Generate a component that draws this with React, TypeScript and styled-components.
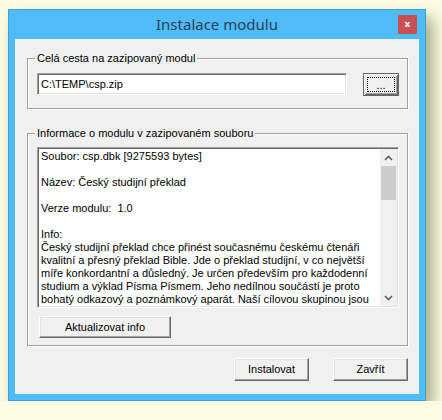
import React from "react";
import styled, { createGlobalStyle } from "styled-components";

const Global = createGlobalStyle`
  html, body { margin: 0; padding: 0; }
  body {
    background: #fcfce3;
    font-family: "Liberation Sans", Arial, sans-serif;
    font-size: 11px;
    color: #000;
  }
`;

const Page = styled.div`
  padding: 9px 0 0 8px;
`;

const Window = styled.div`
  width: 418px;
  height: 392px;
  box-sizing: border-box;
  background: #4fbcf7;
  border: 1px solid #3f9fdc;
  padding: 0 6px 6px 6px;
  display: flex;
  flex-direction: column;
  box-shadow: 7px 9px 14px rgba(90, 90, 50, 0.5);
`;

const TitleBar = styled.div`
  height: 29px;
  display: grid;
  grid-template-columns: 1fr auto 1fr;
  align-items: start;
`;

const Title = styled.div`
  grid-column: 2;
  font-family: "Noto Sans", "Open Sans", sans-serif;
  font-size: 15px;
  line-height: 29px;
  color: #2b3f55;
`;

const CloseButton = styled.div`
  grid-column: 3;
  justify-self: end;
  margin: 5px 2px 0 0;
  width: 19px;
  height: 19px;
  background: #c75050;
  color: #fff;
  font-family: "DejaVu Sans", sans-serif;
  font-weight: bold;
  font-size: 9px;
  line-height: 18px;
  text-align: center;
`;

const Client = styled.div`
  flex: 1;
  background: #f0f0f0;
  padding-top: 13px;
  display: flex;
  flex-direction: column;
`;

const Group = styled.fieldset<{ $top?: number }>`
  margin: ${(p) => p.$top ?? 0}px 11px 0 12px;
  min-width: 0;
  border: 1px solid #a0a0a0;
  box-shadow: inset 1px 1px #fff, 1px 1px #fff;
  padding: ${(p) => (p.$top ? "7px 8px 7px 9px" : "8px 8px 12px 9px")};
`;

const Legend = styled.legend`
  margin-left: -2px;
  padding: 0 2px;
  line-height: 13px;
  background: #f0f0f0;
`;

const PathRow = styled.div`
  display: flex;
  align-items: flex-start;
  gap: 16px;
`;

const Sunken = styled.div`
  box-sizing: border-box;
  background: #fff;
  border: 1px solid;
  border-color: #a0a0a0 #fff #fff #a0a0a0;
  box-shadow: inset 1px 1px #696969, inset -1px -1px #e3e3e3;
`;

const PathInput = styled(Sunken)`
  width: 310px;
  height: 22px;
  padding: 0 2px 0 3px;
  line-height: 20px;
  white-space: pre;
`;

const Button = styled.div<{ $w: number; $h?: number }>`
  box-sizing: border-box;
  width: ${(p) => p.$w}px;
  height: ${(p) => p.$h ?? 23}px;
  background: #f0f0f0;
  border: 1px solid;
  border-color: #fff #696969 #696969 #fff;
  box-shadow: inset -1px -1px #a0a0a0, inset 1px 1px #e3e3e3;
  display: flex;
  align-items: center;
  justify-content: center;
  line-height: 13px;
`;

const DefaultButton = styled.div`
  box-sizing: border-box;
  width: 36px;
  height: 23px;
  background: #f0f0f0;
  border: 1px solid #646464;
  box-shadow: inset 1px 1px #fff, inset -1px -1px #696969, inset 2px 2px #e3e3e3,
    inset -2px -2px #a0a0a0;
  padding: 3px;
  display: flex;
`;

const FocusRect = styled.div`
  flex: 1;
  border: 1px dotted #000;
  display: flex;
  align-items: flex-end;
  justify-content: center;
  line-height: 12px;
`;

const InfoBox = styled(Sunken)`
  width: 362px;
  height: 161px;
  display: flex;
  padding: 1px;
  overflow: hidden;
`;

const InfoText = styled.div`
  flex: 1;
  padding: 1px 0 0 2px;
  overflow: hidden;
`;

const Line = styled.div`
  height: 13px;
  line-height: 13px;
  white-space: pre;
`;

const ScrollBar = styled.div`
  width: 17px;
  background: #f0f0f0;
  display: flex;
  flex-direction: column;
`;

const Arrow = styled.div`
  height: 17px;
  display: flex;
  align-items: center;
  justify-content: center;
`;

const Thumb = styled.div`
  height: 34px;
  margin: 0 1px;
  background: #cdcdcd;
`;

const Track = styled.div`
  flex: 1;
`;

const UpdateButton = styled(Button)`
  margin: 8px 0 0 2px;
`;

const Footer = styled.div`
  margin-top: 12px;
  padding-right: 11px;
  display: flex;
  justify-content: flex-end;
  gap: 24px;
`;

const Chevron = ({ up }: { up?: boolean }) => (
  <svg width="9" height="6" viewBox="0 0 9 6">
    <path
      d={up ? "M1 5 L4.5 1.5 L8 5" : "M1 1 L4.5 4.5 L8 1"}
      fill="none"
      stroke="#606060"
      strokeWidth="1.6"
    />
  </svg>
);

const lines = [
  "Soubor: csp.dbk [9275593 bytes]",
  "",
  "Název: Český studijní překlad",
  "",
  "Verze modulu:  1.0",
  "",
  "Info:",
  "Český studijní překlad chce přinést současnému českému čtenáři",
  "kvalitní a přesný překlad Bible. Jde o překlad studijní, v co největší",
  "míře konkordantní a důsledný. Je určen především pro každodenní",
  "studium a výklad Písma Písmem. Jeho nedílnou součástí je proto",
  "bohatý odkazový a poznámkový aparát. Naší cílovou skupinou jsou",
];

export default function App() {
  return (
    <>
      <Global />
      <Page>
        <Window>
          <TitleBar>
            <Title>Instalace modulu</Title>
            <CloseButton>x</CloseButton>
          </TitleBar>
          <Client>
            <Group>
              <Legend>Celá cesta na zazipovaný modul</Legend>
              <PathRow>
                <PathInput>C:\TEMP\csp.zip</PathInput>
                <DefaultButton>
                  <FocusRect>...</FocusRect>
                </DefaultButton>
              </PathRow>
            </Group>
            <Group $top={18}>
              <Legend>Informace o modulu v zazipovaném souboru</Legend>
              <InfoBox>
                <InfoText>
                  {lines.map((l, i) => (
                    <Line key={i}>{l}</Line>
                  ))}
                </InfoText>
                <ScrollBar>
                  <Arrow>
                    <Chevron up />
                  </Arrow>
                  <Thumb />
                  <Track />
                  <Arrow>
                    <Chevron />
                  </Arrow>
                </ScrollBar>
              </InfoBox>
              <UpdateButton $w={132} $h={22}>
                Aktualizovat info
              </UpdateButton>
            </Group>
            <Footer>
              <Button $w={75}>Instalovat</Button>
              <Button $w={75}>Zavřít</Button>
            </Footer>
          </Client>
        </Window>
      </Page>
    </>
  );
}
